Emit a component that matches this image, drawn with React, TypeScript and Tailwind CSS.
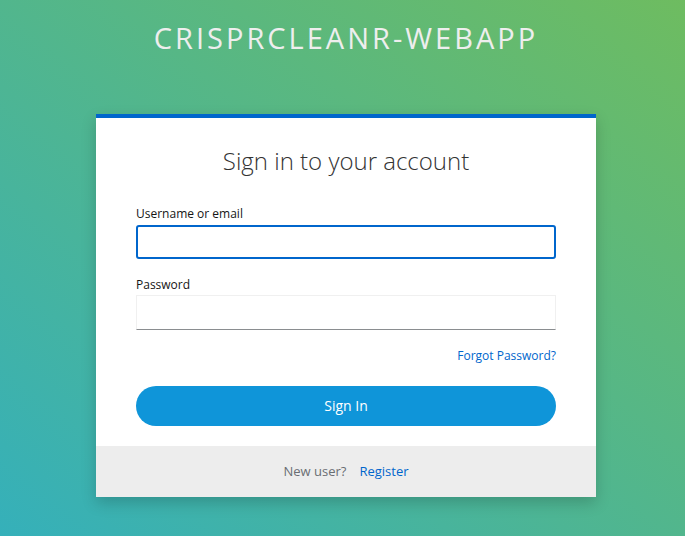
import React from "react";

export default function App() {
  return (
    <div
      className="w-[685px] h-[536px] overflow-hidden pl-[7px] flex flex-col items-center bg-[linear-gradient(to_top_right,#35b0ba,#6ebc60)]"
      style={{ fontFamily: '"Open Sans", "Liberation Sans", sans-serif' }}
    >
      <div className="pt-[20px] text-[29px] leading-[35px] tracking-[3px] uppercase text-[#eeeeee] text-center">
        crisprcleanr-webapp
      </div>
      <div className="mt-[59px] w-[500px] bg-white border-t-4 border-[#0066cc] shadow-[0_6px_14px_rgba(0,0,0,0.18)]">
        <div className="px-10 pt-[28px] pb-[20px]">
          <h1 className="text-center text-[24px] leading-[29px] font-light text-[#333333]">
            Sign in to your account
          </h1>
          <div className="mt-[30px]">
            <label className="block text-[12px] leading-[18px] text-[#151515] mb-[2px]">
              Username or email
            </label>
            <div className="h-[34px] rounded-[3px] border-2 border-[#0066cc] bg-white" />
          </div>
          <div className="mt-[17px]">
            <label className="block text-[12px] leading-[18px] text-[#151515] mb-[1px]">
              Password
            </label>
            <div className="h-[35px] border border-[#f0f0f0] border-b-[#8a8d90] bg-white" />
          </div>
          <div className="mt-[17px] flex justify-end">
            <a className="text-[12px] leading-[18px] text-[#0066cc]">Forgot Password?</a>
          </div>
          <button className="mt-[21px] w-full h-[40px] rounded-full bg-[#0f95d9] text-white text-[14px] leading-[20px] pb-[1px]">
            Sign In
          </button>
        </div>
        <div className="h-[51px] bg-[#ededed] flex items-center justify-center text-[13px]">
          <span className="text-[#6a6e73]">New user?</span>
          <a className="ml-[13px] text-[#0066cc]">Register</a>
        </div>
      </div>
    </div>
  );
}
